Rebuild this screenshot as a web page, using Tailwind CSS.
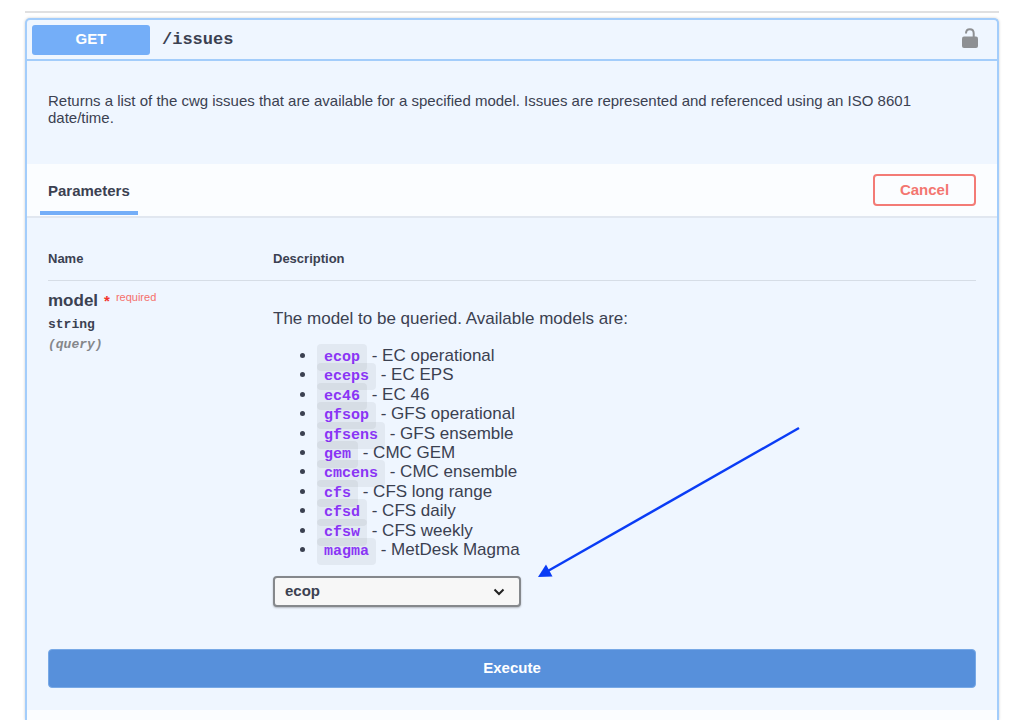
<!DOCTYPE html>
<html lang="en">
<head>
<meta charset="utf-8">
<title>GET /issues</title>
<script src="https://cdn.jsdelivr.net/npm/@tailwindcss/browser@4"></script>
</head>
<body class="bg-white font-['Liberation_Sans',Arial,sans-serif] text-[#3b4151]">
<main class="flex min-h-screen flex-col pl-[25px] pr-[27px] pt-[11px]">
  <hr class="h-[2px] border-0 bg-[#e0e0e1]">
  <section class="mt-[5px] flex flex-1 flex-col rounded-t-[5px] border-2 border-b-0 border-[#a3cdfb] bg-[#eff6ff] shadow-[0_0_3px_rgba(0,0,0,0.19)]">
    <header class="flex h-[41px] items-center border-b-2 border-[#a3cdfb] pl-[5px] pr-[18px]">
      <button class="h-[30px] w-[118px] rounded-[3px] bg-[#74aef8] text-[15px] font-bold text-white">GET</button>
      <h1 class="ml-3 flex-1 font-['Liberation_Mono',monospace] text-[17px] font-bold">/issues</h1>
      <button aria-label="Authorize" class="mb-1">
        <svg class="h-[22px] w-[18px]" viewBox="0 0 18 22"><path d="M5 6.500C5 3.500 6.500 2.200 8.900 2.200s3.800 1.500 3.800 4.300V11" fill="none" stroke="#8e9093" stroke-width="2"/><rect x="1" y="9.500" width="16" height="11.500" rx="2" fill="#8e9093"/></svg>
      </button>
    </header>
    <div class="h-[103px] px-[21px] pt-[31px]">
      <p class="text-[15px] leading-[17px]">Returns a list of the cwg issues that are available for a specified model. Issues are represented and referenced using an ISO 8601 date/time.</p>
    </div>
    <div class="flex h-[54px] justify-between border-b-2 border-[#e1e7f0] bg-[#fbfdff] pl-[13px] pr-[21px]">
      <h2 class="h-[51px] border-b-4 border-[#74aef8] px-2 text-[15px] leading-[53px] font-bold">Parameters</h2>
      <button class="mt-[10px] h-8 w-[103px] rounded-[4px] border-2 border-[#f37b76] text-[15px] font-bold text-[#f37670]">Cancel</button>
    </div>
    <div class="px-[21px] pb-[22px] pt-[31px]">
      <table class="w-full table-fixed text-left">
        <thead>
          <tr class="border-b border-[#d6dde6] text-[13px] leading-5">
            <th class="w-[225px] pb-[11px]">Name</th>
            <th class="pb-[11px]">Description</th>
          </tr>
        </thead>
        <tbody>
          <tr class="align-top">
            <td class="pt-[10px]">
              <div class="flex text-[17px] leading-5 font-bold"><label for="model">model</label><span class="ml-[6px] text-[15px] text-[#f3342c]">*</span><span class="ml-[6px] text-[11px] leading-[12px] font-normal text-[#f5706b]">required</span></div>
              <div class="mt-1 font-['Liberation_Mono',monospace] text-[13px] leading-5 font-bold">string</div>
              <div class="font-['Liberation_Mono',monospace] text-[13px] leading-5 font-bold italic text-[#85878a]">(query)</div>
            </td>
            <td class="pt-[28px] text-[17px]">
              <p class="leading-5">The model to be queried. Available models are:</p>
              <ul class="mt-[17px] flex h-[213px] list-disc flex-col justify-between pl-11 leading-[19px] [&_code]:rounded-[4px] [&_code]:bg-black/5 [&_code]:px-[7px] [&_code]:py-[5px] [&_code]:font-['Liberation_Mono',monospace] [&_code]:text-[15px] [&_code]:leading-[15px] [&_code]:font-bold [&_code]:text-[#8a35f5]">
                <li><code>ecop</code> - EC operational</li>
                <li><code>eceps</code> - EC EPS</li>
                <li><code>ec46</code> - EC 46</li>
                <li><code>gfsop</code> - GFS operational</li>
                <li><code>gfsens</code> - GFS ensemble</li>
                <li><code>gem</code> - CMC GEM</li>
                <li><code>cmcens</code> - CMC ensemble</li>
                <li><code>cfs</code> - CFS long range</li>
                <li><code>cfsd</code> - CFS daily</li>
                <li><code>cfsw</code> - CFS weekly</li>
                <li><code>magma</code> - MetDesk Magma</li>
              </ul>
              <div class="relative mt-[17px] w-[248px]">
                <select id="model" class="block h-[31px] w-full appearance-none rounded-[4px] border-2 border-[#85888c] bg-[#f7f7f7] px-[10px] text-[15px] font-bold shadow-[0_1px_2px_rgba(0,0,0,0.25)]">
                  <option>ecop</option><option>eceps</option><option>ec46</option><option>gfsop</option><option>gfsens</option><option>gem</option><option>cmcens</option><option>cfs</option><option>cfsd</option><option>cfsw</option><option>magma</option>
                </select>
                <svg class="pointer-events-none absolute right-4 top-3 h-2 w-3" viewBox="0 0 12 8"><path d="M1.500 1.500 6 6l4.500-4.500" fill="none" stroke="#222" stroke-width="2"/></svg>
                <svg class="pointer-events-none absolute bottom-[29px] left-[264px] h-[153px] w-[264px]" viewBox="0 0 264 153"><path d="M262 3 10 146.500" stroke="#0a3cf5" stroke-width="2.500" fill="none"/><path d="M1 152 9 139.500 15.500 151.500Z" fill="#0a3cf5"/></svg>
              </div>
            </td>
          </tr>
        </tbody>
      </table>
      <button class="mt-[42px] h-[39px] w-full rounded-[4px] border border-[#78a9e6] bg-[#5790db] text-[15px] font-bold text-white">Execute</button>
    </div>
    <div class="flex-1 bg-[#fbfdff]"></div>
  </section>
</main>
</body>
</html>
